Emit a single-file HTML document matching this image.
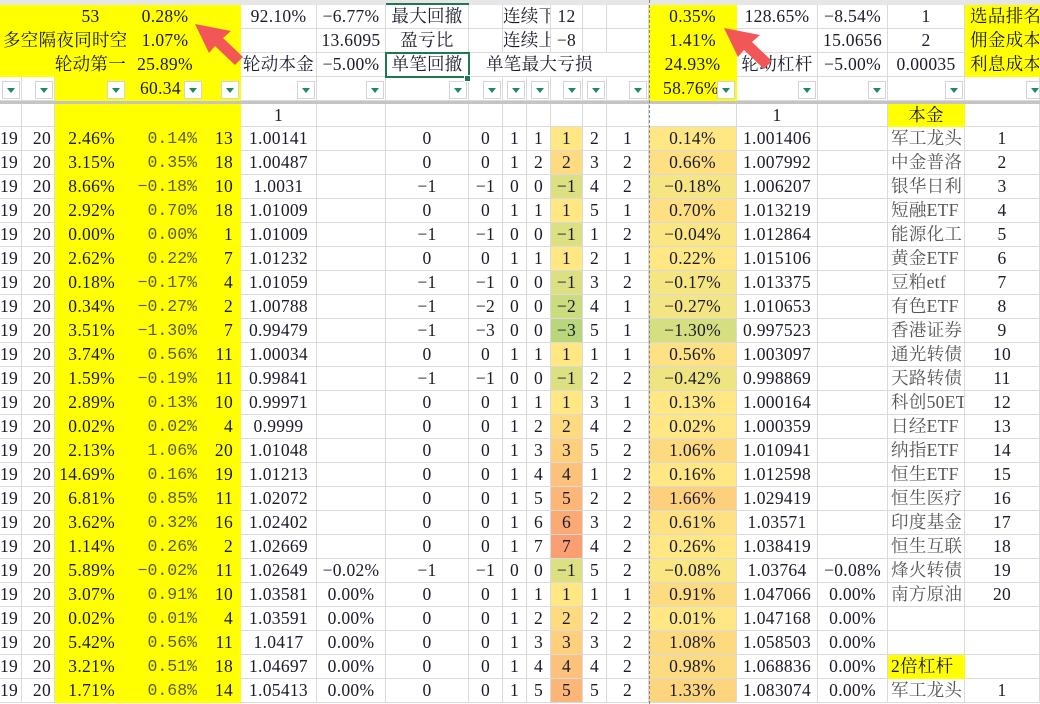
<!DOCTYPE html>
<html><head><meta charset="utf-8"><style>
body{margin:0;width:1040px;height:704px;overflow:hidden;background:#fff;position:relative;font-family:"Liberation Serif","Noto Serif CJK SC",serif;color:#1a1a2a;font-size:17px}
#strip{position:absolute;left:0;top:0;width:1040px;height:5px;background:#e6e6e6}
table{position:absolute;left:0;top:5px;border-collapse:separate;border-spacing:0;table-layout:fixed;width:1040px}
td{padding:0;border-right:1px solid #dadada;border-bottom:1px solid #dadada;height:23px;line-height:23px;text-align:center;white-space:nowrap;overflow:hidden;position:relative;font-size:17.5px;letter-spacing:0.3px}
tr.s td{height:20px;line-height:22px}
.y{background:#ffff00;border-right-color:#ffff00;border-bottom-color:#ffff00}
.r{text-align:right}
.l{text-align:left;padding-left:3px}
.m{font-family:"Liberation Mono",monospace;color:#5c5c30;text-align:right;padding-right:6px;font-size:16.5px;letter-spacing:0}
td.c0{text-align:right;padding-right:4px}
td.c1{text-align:right;padding-right:3px}
td.c2{text-align:right;padding-right:11px}
td.c4{text-align:right;padding-right:7px}
td.n{text-align:left;padding-left:3px;color:#555;overflow:hidden}
.b{position:absolute;right:1px;top:4px;width:18px;height:18px;background:#fff;border:1px solid #d4d4d4;box-sizing:border-box}
.b::after{content:"";position:absolute;left:4px;top:6px;border-left:4px solid transparent;border-right:4px solid transparent;border-top:5px solid #1f8a5c}
#sel{position:absolute;left:385px;top:52px;width:81px;height:22px;border:2px solid #1e7a4e}
#h{position:absolute;left:472px;top:75px;width:5px;height:5px;background:#1e7a4e;border:1px solid #fff;margin-left:-8px}
#gl{position:absolute;left:386px;top:3px;width:83px;height:2px;background:#1e7a4e}
#div{position:absolute;left:0;top:101px;width:1040px;height:3px;background:#c4c4c4}
#dash{position:absolute;left:649px;top:0;height:704px;border-left:1px dashed #808080}
</style></head><body>
<div id="strip"></div>
<table>
<colgroup><col style="width:22px"><col style="width:33px"><col style="width:72px"><col style="width:77px"><col style="width:37px"><col style="width:76px"><col style="width:69px"><col style="width:83px"><col style="width:34px"><col style="width:24px"><col style="width:24px"><col style="width:32px"><col style="width:24px"><col style="width:42px"><col style="width:88px"><col style="width:81px"><col style="width:70px"><col style="width:77px"><col style="width:75px"></colgroup>
<tr><td class="y" colspan="2"></td><td class="y">53</td><td class="y">0.28%</td><td class="y"></td><td>92.10%</td><td>−6.77%</td><td>最大回撤</td><td></td><td colspan="2" style="text-align:left">连续下跌</td><td>12</td><td></td><td></td><td class="y">0.35%</td><td>128.65%</td><td>−8.54%</td><td>1</td><td class="y" style="text-align:left;padding-left:5px">选品排名</td></tr>
<tr><td class="y" colspan="3" style="text-align:left;padding-left:3px">多空隔夜同时空</td><td class="y">1.07%</td><td class="y"></td><td></td><td>13.6095</td><td>盈亏比</td><td></td><td colspan="2" style="text-align:left">连续上涨</td><td>−8</td><td></td><td></td><td class="y">1.41%</td><td></td><td>15.0656</td><td>2</td><td class="y" style="text-align:left;padding-left:5px">佣金成本</td></tr>
<tr><td class="y" colspan="3" style="text-align:right">轮动第一</td><td class="y">25.89%</td><td class="y"></td><td>轮动本金</td><td>−5.00%</td><td>单笔回撤</td><td colspan="6" style="text-align:left;padding-left:17px">单笔最大亏损</td><td class="y">24.93%</td><td>轮动杠杆</td><td>−5.00%</td><td>0.00035</td><td class="y" style="text-align:left;padding-left:5px">利息成本</td></tr>
<tr><td><span class="b"></span></td><td><span class="b"></span></td><td class="y"><span class="b"></span></td><td class="y" style="text-align:left;padding-left:13px">60.34<span class="b"></span></td><td class="y"><span class="b"></span></td><td><span class="b"></span></td><td><span class="b"></span></td><td><span class="b"></span></td><td><span class="b"></span></td><td><span class="b"></span></td><td><span class="b"></span></td><td><span class="b"></span></td><td><span class="b"></span></td><td><span class="b"></span></td><td class="y" style="text-align:left;padding-left:14px">58.76%<span class="b"></span></td><td><span class="b"></span></td><td><span class="b"></span></td><td><span class="b"></span></td><td><span class="b" style="right:-5px"></span></td></tr>
<tr style="height:3px"><td colspan="19" style="height:3px;border:0;line-height:3px"></td></tr>
<tr class="s"><td></td><td></td><td class="y"></td><td class="y"></td><td class="y"></td><td>1</td><td></td><td></td><td></td><td></td><td></td><td></td><td></td><td></td><td></td><td>1</td><td></td><td class="y">本金</td><td></td></tr>
<tr><td class="c0">19</td><td class="c1">20</td><td class="y c2">2.46%</td><td class="y m">0.14%</td><td class="y c4">13</td><td>1.00141</td><td></td><td>0</td><td>0</td><td>1</td><td>1</td><td style="background:#ffe884">1</td><td>2</td><td>1</td><td style="background:#ffe884">0.14%</td><td>1.001406</td><td></td><td class="n">军工龙头</td><td>1</td></tr>
<tr><td class="c0">19</td><td class="c1">20</td><td class="y c2">3.15%</td><td class="y m">0.35%</td><td class="y c4">18</td><td>1.00487</td><td></td><td>0</td><td>0</td><td>1</td><td>2</td><td style="background:#fedb81">2</td><td>3</td><td>2</td><td style="background:#fedf82">0.66%</td><td>1.007992</td><td></td><td class="n">中金普洛</td><td>2</td></tr>
<tr><td class="c0">19</td><td class="c1">20</td><td class="y c2">8.66%</td><td class="y m">−0.18%</td><td class="y c4">10</td><td>1.0031</td><td></td><td>−1</td><td>−1</td><td>0</td><td>0</td><td style="background:#dde082">−1</td><td>4</td><td>2</td><td style="background:#f6e583">−0.18%</td><td>1.006207</td><td></td><td class="n">银华日利</td><td>3</td></tr>
<tr><td class="c0">19</td><td class="c1">20</td><td class="y c2">2.92%</td><td class="y m">0.70%</td><td class="y c4">18</td><td>1.01009</td><td></td><td>0</td><td>0</td><td>1</td><td>1</td><td style="background:#ffe884">1</td><td>5</td><td>1</td><td style="background:#fedf82">0.70%</td><td>1.013219</td><td></td><td class="n">短融ETF</td><td>4</td></tr>
<tr><td class="c0">19</td><td class="c1">20</td><td class="y c2">0.00%</td><td class="y m">0.00%</td><td class="y c4">1</td><td>1.01009</td><td></td><td>−1</td><td>−1</td><td>0</td><td>0</td><td style="background:#dde082">−1</td><td>1</td><td>2</td><td style="background:#fae683">−0.04%</td><td>1.012864</td><td></td><td class="n">能源化工</td><td>5</td></tr>
<tr><td class="c0">19</td><td class="c1">20</td><td class="y c2">2.62%</td><td class="y m">0.22%</td><td class="y c4">7</td><td>1.01232</td><td></td><td>0</td><td>0</td><td>1</td><td>1</td><td style="background:#ffe884">1</td><td>2</td><td>1</td><td style="background:#ffe884">0.22%</td><td>1.015106</td><td></td><td class="n">黄金ETF</td><td>6</td></tr>
<tr><td class="c0">19</td><td class="c1">20</td><td class="y c2">0.18%</td><td class="y m">−0.17%</td><td class="y c4">4</td><td>1.01059</td><td></td><td>−1</td><td>−1</td><td>0</td><td>0</td><td style="background:#dde082">−1</td><td>3</td><td>2</td><td style="background:#f6e583">−0.17%</td><td>1.013375</td><td></td><td class="n">豆粕etf</td><td>7</td></tr>
<tr><td class="c0">19</td><td class="c1">20</td><td class="y c2">0.34%</td><td class="y m">−0.27%</td><td class="y c4">2</td><td>1.00788</td><td></td><td>−1</td><td>−2</td><td>0</td><td>0</td><td style="background:#cbdc7f">−2</td><td>4</td><td>1</td><td style="background:#f3e583">−0.27%</td><td>1.010653</td><td></td><td class="n">有色ETF</td><td>8</td></tr>
<tr><td class="c0">19</td><td class="c1">20</td><td class="y c2">3.51%</td><td class="y m">−1.30%</td><td class="y c4">7</td><td>0.99479</td><td></td><td>−1</td><td>−3</td><td>0</td><td>0</td><td style="background:#b8d77d">−3</td><td>5</td><td>1</td><td style="background:#d5de80">−1.30%</td><td>0.997523</td><td></td><td class="n">香港证券</td><td>9</td></tr>
<tr><td class="c0">19</td><td class="c1">20</td><td class="y c2">3.74%</td><td class="y m">0.56%</td><td class="y c4">11</td><td>1.00034</td><td></td><td>0</td><td>0</td><td>1</td><td>1</td><td style="background:#ffe884">1</td><td>1</td><td>1</td><td style="background:#fee183">0.56%</td><td>1.003097</td><td></td><td class="n">通光转债</td><td>10</td></tr>
<tr><td class="c0">19</td><td class="c1">20</td><td class="y c2">1.59%</td><td class="y m">−0.19%</td><td class="y c4">11</td><td>0.99841</td><td></td><td>−1</td><td>−1</td><td>0</td><td>0</td><td style="background:#dde082">−1</td><td>2</td><td>2</td><td style="background:#eee482">−0.42%</td><td>0.998869</td><td></td><td class="n">天路转债</td><td>11</td></tr>
<tr><td class="c0">19</td><td class="c1">20</td><td class="y c2">2.89%</td><td class="y m">0.13%</td><td class="y c4">10</td><td>0.99971</td><td></td><td>0</td><td>0</td><td>1</td><td>1</td><td style="background:#ffe884">1</td><td>3</td><td>1</td><td style="background:#ffe884">0.13%</td><td>1.000164</td><td></td><td class="n">科创50ETF</td><td>12</td></tr>
<tr><td class="c0">19</td><td class="c1">20</td><td class="y c2">0.02%</td><td class="y m">0.02%</td><td class="y c4">4</td><td>0.9999</td><td></td><td>0</td><td>0</td><td>1</td><td>2</td><td style="background:#fedb81">2</td><td>4</td><td>2</td><td style="background:#fee784">0.02%</td><td>1.000359</td><td></td><td class="n">日经ETF</td><td>13</td></tr>
<tr><td class="c0">19</td><td class="c1">20</td><td class="y c2">2.13%</td><td class="y m">1.06%</td><td class="y c4">20</td><td>1.01048</td><td></td><td>0</td><td>0</td><td>1</td><td>3</td><td style="background:#fdd07e">3</td><td>5</td><td>2</td><td style="background:#fdd980">1.06%</td><td>1.010941</td><td></td><td class="n">纳指ETF</td><td>14</td></tr>
<tr><td class="c0">19</td><td class="c1">20</td><td class="y c2">14.69%</td><td class="y m">0.16%</td><td class="y c4">19</td><td>1.01213</td><td></td><td>0</td><td>0</td><td>1</td><td>4</td><td style="background:#fcc27b">4</td><td>1</td><td>2</td><td style="background:#ffe884">0.16%</td><td>1.012598</td><td></td><td class="n">恒生ETF</td><td>15</td></tr>
<tr><td class="c0">19</td><td class="c1">20</td><td class="y c2">6.81%</td><td class="y m">0.85%</td><td class="y c4">11</td><td>1.02072</td><td></td><td>0</td><td>0</td><td>1</td><td>5</td><td style="background:#fcb678">5</td><td>2</td><td>2</td><td style="background:#fdd07e">1.66%</td><td>1.029419</td><td></td><td class="n">恒生医疗</td><td>16</td></tr>
<tr><td class="c0">19</td><td class="c1">20</td><td class="y c2">3.62%</td><td class="y m">0.32%</td><td class="y c4">16</td><td>1.02402</td><td></td><td>0</td><td>0</td><td>1</td><td>6</td><td style="background:#fbaa75">6</td><td>3</td><td>2</td><td style="background:#fee183">0.61%</td><td>1.03571</td><td></td><td class="n">印度基金</td><td>17</td></tr>
<tr><td class="c0">19</td><td class="c1">20</td><td class="y c2">1.14%</td><td class="y m">0.26%</td><td class="y c4">2</td><td>1.02669</td><td></td><td>0</td><td>0</td><td>1</td><td>7</td><td style="background:#fa9f72">7</td><td>4</td><td>2</td><td style="background:#ffe784">0.26%</td><td>1.038419</td><td></td><td class="n">恒生互联</td><td>18</td></tr>
<tr><td class="c0">19</td><td class="c1">20</td><td class="y c2">5.89%</td><td class="y m">−0.02%</td><td class="y c4">11</td><td>1.02649</td><td>−0.02%</td><td>−1</td><td>−1</td><td>0</td><td>0</td><td style="background:#dde082">−1</td><td>5</td><td>2</td><td style="background:#fae683">−0.08%</td><td>1.03764</td><td>−0.08%</td><td class="n">烽火转债</td><td>19</td></tr>
<tr><td class="c0">19</td><td class="c1">20</td><td class="y c2">3.07%</td><td class="y m">0.91%</td><td class="y c4">10</td><td>1.03581</td><td>0.00%</td><td>0</td><td>0</td><td>1</td><td>1</td><td style="background:#ffe884">1</td><td>1</td><td>1</td><td style="background:#fddb80">0.91%</td><td>1.047066</td><td>0.00%</td><td class="n">南方原油</td><td>20</td></tr>
<tr><td class="c0">19</td><td class="c1">20</td><td class="y c2">0.02%</td><td class="y m">0.01%</td><td class="y c4">4</td><td>1.03591</td><td>0.00%</td><td>0</td><td>0</td><td>1</td><td>2</td><td style="background:#fedb81">2</td><td>2</td><td>2</td><td style="background:#fee784">0.01%</td><td>1.047168</td><td>0.00%</td><td class="n"></td><td></td></tr>
<tr><td class="c0">19</td><td class="c1">20</td><td class="y c2">5.42%</td><td class="y m">0.56%</td><td class="y c4">11</td><td>1.0417</td><td>0.00%</td><td>0</td><td>0</td><td>1</td><td>3</td><td style="background:#fdd07e">3</td><td>3</td><td>2</td><td style="background:#fdd980">1.08%</td><td>1.058503</td><td>0.00%</td><td class="n"></td><td></td></tr>
<tr><td class="c0">19</td><td class="c1">20</td><td class="y c2">3.21%</td><td class="y m">0.51%</td><td class="y c4">18</td><td>1.04697</td><td>0.00%</td><td>0</td><td>0</td><td>1</td><td>4</td><td style="background:#fcc27b">4</td><td>4</td><td>2</td><td style="background:#fddb80">0.98%</td><td>1.068836</td><td>0.00%</td><td class="y" style="text-align:left;padding-left:3px">2倍杠杆</td><td></td></tr>
<tr><td class="c0">19</td><td class="c1">20</td><td class="y c2">1.71%</td><td class="y m">0.68%</td><td class="y c4">14</td><td>1.05413</td><td>0.00%</td><td>0</td><td>0</td><td>1</td><td>5</td><td style="background:#fcb678">5</td><td>5</td><td>2</td><td style="background:#fdd57f">1.33%</td><td>1.083074</td><td>0.00%</td><td class="n">军工龙头</td><td>1</td></tr>
</table>
<div id="div"></div>
<div id="dash"></div>
<div id="gl"></div>
<div id="sel"></div>
<div id="h"></div>
<svg style="position:absolute;left:0;top:0" width="1040" height="704">
<polygon fill="#f25656" points="195,24 231,31 223,38 243,57 235,65 215,46 209,53"/>
<polygon fill="#f25656" points="724,28 760,35 752,42 772,61 764,69 744,50 738,57"/>
</svg>
</body></html>
